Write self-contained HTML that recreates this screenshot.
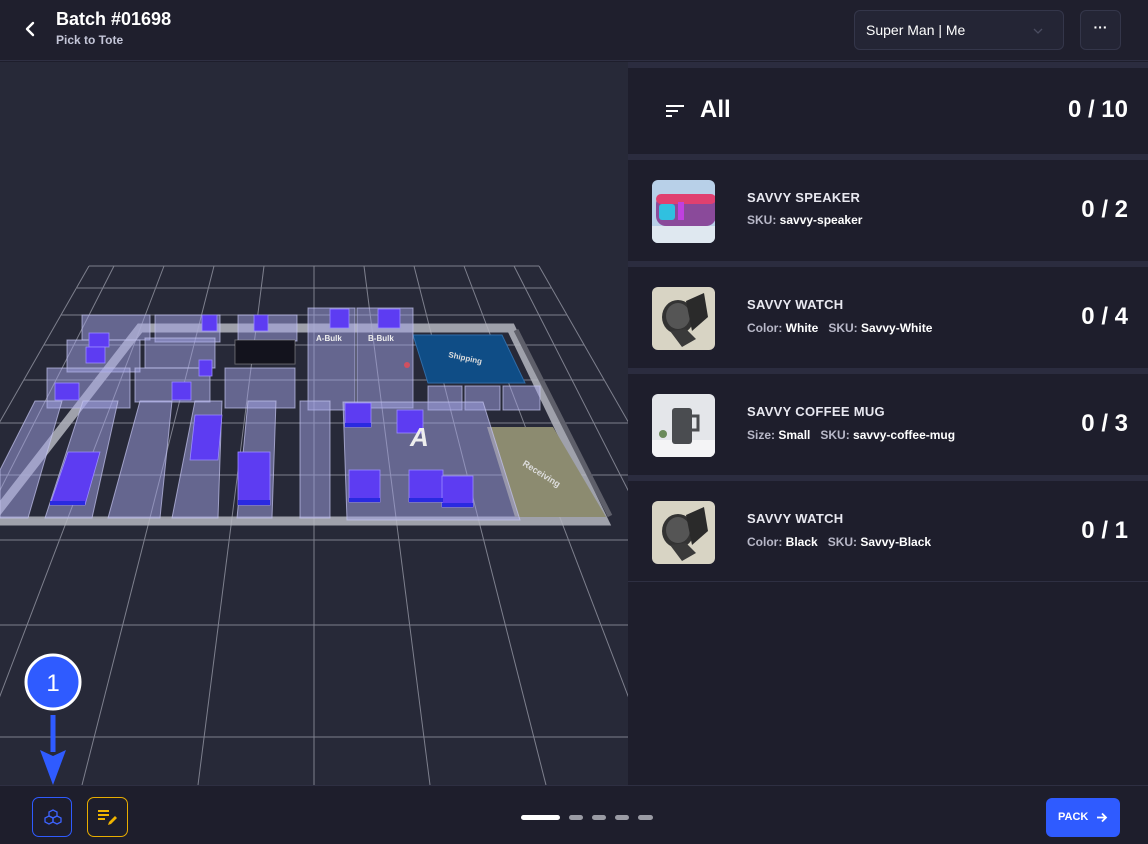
<!DOCTYPE html>
<html><head><meta charset="utf-8">
<style>
*{margin:0;padding:0;box-sizing:border-box}
body{width:1148px;height:844px;overflow:hidden;background:#1e1e2c;font-family:"Liberation Sans",sans-serif;color:#fff;position:relative}
.abs{position:absolute}
.hdr{left:0;top:0;width:1148px;height:61px;background:#1f1f2d;border-bottom:1px solid #2e2f42}
.canvas{left:0;top:62px;width:628px;height:723px;background:#272938;overflow:hidden}
.panel{left:628px;top:62px;width:520px;height:723px;background:#1e1e2c}
.sep{position:absolute;left:0;width:520px;height:6px;background:#2b2c3f}
.row{position:absolute;left:0;width:520px}
.thumb{position:absolute;left:24px;width:63px;height:63px;border-radius:6px;overflow:hidden}
.name{position:absolute;left:119px;font-size:13px;font-weight:bold;letter-spacing:.3px;color:#e8e8f0}
.det{position:absolute;left:119px;font-size:12px;font-weight:bold;color:#fff;white-space:nowrap}
.det span{color:#b8b8c8}
.cnt{position:absolute;right:20px;font-size:24px;font-weight:bold}
.foot{left:0;top:785px;width:1148px;height:59px;background:#1e1e2c;border-top:1px solid #2e2f42}
</style></head><body>
<div class="abs hdr">
  <svg class="abs" style="left:24px;top:21px" width="14" height="16" viewBox="0 0 14 16"><path d="M9 2 L3 8 L9 14" fill="none" stroke="#fff" stroke-width="2.4" stroke-linecap="round" stroke-linejoin="round"/></svg>
  <div class="abs" style="left:56px;top:9px;font-size:18px;font-weight:bold">Batch #01698</div>
  <div class="abs" style="left:56px;top:33px;font-size:12px;font-weight:bold;color:#c4c6d8">Pick to Tote</div>
  <div class="abs" style="left:854px;top:10px;width:210px;height:40px;background:#242535;border:1px solid #34364a;border-radius:6px">
    <div class="abs" style="left:11px;top:11px;font-size:14px;color:#fff">Super Man | Me</div>
    <svg class="abs" style="left:178px;top:16px" width="10" height="8" viewBox="0 0 10 8"><path d="M1 2 L5 6 L9 2" fill="none" stroke="#4a4c60" stroke-width="1.3"/></svg>
  </div>
  <div class="abs" style="left:1080px;top:10px;width:41px;height:40px;background:#242535;border:1px solid #34364a;border-radius:6px;text-align:center;font-size:14px;line-height:32px;font-weight:bold">···</div>
</div>

<div class="abs canvas">
<svg width="628" height="723" viewBox="0 62 628 723" style="position:absolute;left:0;top:0">
 <g stroke="#8d8f9c" stroke-width="1" fill="none" opacity="0.85">
  <line x1="89" y1="266" x2="-208" y2="785"/>
  <line x1="114" y1="266" x2="-150" y2="785"/>
  <line x1="164" y1="266" x2="-34" y2="785"/>
  <line x1="214" y1="266" x2="82" y2="785"/>
  <line x1="264" y1="266" x2="198" y2="785"/>
  <line x1="314" y1="266" x2="314" y2="785"/>
  <line x1="364" y1="266" x2="430" y2="785"/>
  <line x1="414" y1="266" x2="546" y2="785"/>
  <line x1="464" y1="266" x2="662" y2="785"/>
  <line x1="514" y1="266" x2="778" y2="785"/>
  <line x1="539" y1="266" x2="836" y2="785"/>
  <line x1="89" y1="266" x2="539" y2="266"/>
  <line x1="77" y1="288" x2="551" y2="288"/>
  <line x1="61" y1="315" x2="567" y2="315"/>
  <line x1="44" y1="345" x2="584" y2="345"/>
  <line x1="24" y1="380" x2="604" y2="380"/>
  <line x1="0" y1="423" x2="628" y2="423"/>
  <line x1="0" y1="475" x2="628" y2="475"/>
  <line x1="0" y1="540" x2="628" y2="540"/>
  <line x1="0" y1="625" x2="628" y2="625"/>
  <line x1="0" y1="737" x2="628" y2="737"/>
 </g>
 <!-- floor border frame -->
 <polygon points="140,328 511,328 604,521 -10,521" fill="none" stroke="#b5b6bf" stroke-width="9" stroke-opacity="0.85" stroke-linejoin="miter"/>
 <polyline points="516,330 610,516" fill="none" stroke="#5e5f6a" stroke-width="5"/>
 <!-- Receiving -->
 <polygon points="487,427 553,427 606,517 515,517" fill="#8c8b70"/>
 <text x="522" y="465" font-size="9" fill="#ddd" transform="rotate(32 522 465)" font-weight="bold">Receiving</text>
 <!-- Shipping -->
 <polygon points="413,335 502,335 525,383 428,383" fill="#0f4d86" stroke="#2f6ca8"/>
 <text x="448" y="357" font-size="8" fill="#ddd" font-weight="bold" transform="rotate(12 448 357)">Shipping</text>
 <g fill="#a4a4e6" fill-opacity="0.5" stroke="#c4c4f0" stroke-opacity="0.7" stroke-width="1">
  <rect x="82" y="315" width="68" height="25"/><rect x="155" y="315" width="65" height="27"/><rect x="238" y="315" width="59" height="26"/>
  <rect x="67" y="340" width="73" height="32"/><rect x="145" y="338" width="70" height="30"/>
  <rect x="47" y="368" width="83" height="40"/><rect x="135" y="368" width="75" height="34"/><rect x="225" y="368" width="70" height="40"/>
  <rect x="308" y="308" width="47" height="102"/><rect x="357" y="308" width="56" height="100"/>
  <rect x="428" y="386" width="34" height="24"/><rect x="465" y="386" width="35" height="24"/><rect x="503" y="386" width="37" height="24"/>
  <polygon points="35,401 62,401 28,518 0,518 0,470"/>
  <polygon points="83,401 118,401 92,518 45,518"/>
  <polygon points="140,401 172,401 160,518 108,518"/>
  <polygon points="195,401 222,401 218,518 172,518"/>
  <polygon points="248,401 276,401 272,518 237,518"/>
  <rect x="300" y="401" width="30" height="117"/>
  <polygon points="343,402 483,402 520,520 347,520"/>
 </g>
 <rect x="235" y="340" width="60" height="24" fill="#13131d" stroke="#aaa" stroke-opacity=".5"/>
 <g fill="#5d3cf2" stroke="#9a8cff" stroke-width="0.8">
  <rect x="330" y="309" width="19" height="19"/><rect x="378" y="309" width="22" height="19"/>
  <rect x="202" y="315" width="15" height="16"/><rect x="254" y="315" width="14" height="16"/>
  <rect x="89" y="333" width="20" height="14"/><rect x="86" y="347" width="19" height="16"/>
  <rect x="199" y="360" width="13" height="16"/>
  <rect x="55" y="383" width="24" height="17"/><rect x="172" y="382" width="19" height="18"/>
  <rect x="345" y="403" width="26" height="24"/><rect x="397" y="410" width="26" height="23"/>
  <polygon points="195,415 222,415 218,460 190,460"/>
  <polygon points="68,452 100,452 85,505 50,505"/>
  <rect x="238" y="452" width="32" height="53"/>
  <rect x="349" y="470" width="31" height="32"/><rect x="409" y="470" width="34" height="32"/><rect x="442" y="476" width="31" height="31"/>
 </g>
 <g fill="#2a2ae0">
  <rect x="345" y="423" width="26" height="4"/><rect x="238" y="500" width="32" height="5"/><rect x="349" y="498" width="31" height="4"/><rect x="409" y="498" width="34" height="4"/><rect x="442" y="503" width="31" height="4"/><rect x="50" y="501" width="35" height="4"/>
 </g>
 <g fill="#eee" font-size="8" font-weight="bold">
  <text x="316" y="341">A-Bulk</text><text x="368" y="341">B-Bulk</text>
 </g>
 <circle cx="407" cy="365" r="3" fill="#d05060"/>
 <text x="410" y="446" font-size="26" font-weight="bold" fill="#eee" font-style="italic">A</text>
</svg>
<svg class="abs" style="left:0;top:0" width="628" height="723">
 <path d="M53 653 L53 690" stroke="#2f5bff" stroke-width="5"/>
 <path d="M40 688 L53 723 L66 688 L53 694 Z" fill="#2f5bff"/>
 <circle cx="53" cy="620" r="27" fill="#2f5bff" stroke="#fff" stroke-width="3"/>
 <text x="53" y="629" font-size="24" text-anchor="middle" fill="#fff">1</text>
</svg>
</div>

<div class="abs panel">
  <div class="sep" style="top:0"></div>
  <div class="row" style="top:6px;height:86px">
    <svg class="abs" style="left:38px;top:37px" width="20" height="14"><rect x="0" y="0" width="18" height="2" fill="#fff"/><rect x="0" y="5" width="12" height="2" fill="#fff"/><rect x="0" y="10" width="6" height="2" fill="#fff"/></svg>
    <div class="abs" style="left:72px;top:28px;font-size:24px;font-weight:bold">All</div>
    <div class="cnt" style="top:28px">0 / 10</div>
  </div>
  <div class="sep" style="top:92px"></div>
  <div class="row" style="top:98px;height:101px">
    <div class="thumb" style="top:20px"><svg width="63" height="63"><rect width="63" height="63" fill="#b8d0e8"/><rect x="0" y="46" width="63" height="17" fill="#dfe8f0"/><rect x="4" y="14" width="60" height="32" rx="10" fill="#8a4a9a"/><rect x="4" y="14" width="60" height="10" rx="5" fill="#e04070"/><rect x="7" y="24" width="16" height="16" rx="3" fill="#30c0e0"/><rect x="26" y="22" width="6" height="18" fill="#c040e0"/></svg></div>
    <div class="name" style="top:30px">SAVVY SPEAKER</div>
    <div class="det" style="top:53px"><span>SKU:</span> savvy-speaker</div>
    <div class="cnt" style="top:36px">0 / 2</div>
  </div>
  <div class="sep" style="top:199px"></div>
  <div class="row" style="top:205px;height:101px">
    <div class="thumb" style="top:20px"><svg width="63" height="63"><rect width="63" height="63" fill="#d8d4c4"/><ellipse cx="26" cy="30" rx="16" ry="17" fill="#333"/><ellipse cx="26" cy="29" rx="12" ry="13" fill="#555"/><path d="M34 14 L52 6 L56 30 L40 44 Z" fill="#2a2a2a"/><path d="M18 44 L30 60 L44 52 L34 42 Z" fill="#3a3a3a"/></svg></div>
    <div class="name" style="top:30px">SAVVY WATCH</div>
    <div class="det" style="top:54px"><span>Color:</span> White &nbsp;&nbsp;<span>SKU:</span> Savvy-White</div>
    <div class="cnt" style="top:36px">0 / 4</div>
  </div>
  <div class="sep" style="top:306px"></div>
  <div class="row" style="top:312px;height:101px">
    <div class="thumb" style="top:20px"><svg width="63" height="63"><rect width="63" height="63" fill="#e4e6ea"/><rect x="0" y="46" width="63" height="17" fill="#f4f4f6"/><rect x="20" y="14" width="20" height="36" rx="3" fill="#4a4c50"/><path d="M40 22 h6 v14 h-6" fill="none" stroke="#4a4c50" stroke-width="3"/><circle cx="11" cy="40" r="4" fill="#6a8a5a"/></svg></div>
    <div class="name" style="top:30px">SAVVY COFFEE MUG</div>
    <div class="det" style="top:54px"><span>Size:</span> Small &nbsp;&nbsp;<span>SKU:</span> savvy-coffee-mug</div>
    <div class="cnt" style="top:36px">0 / 3</div>
  </div>
  <div class="sep" style="top:413px"></div>
  <div class="row" style="top:419px;height:101px;border-bottom:1px solid #2e2f42">
    <div class="thumb" style="top:20px"><svg width="63" height="63"><rect width="63" height="63" fill="#d8d4c4"/><ellipse cx="26" cy="30" rx="16" ry="17" fill="#333"/><ellipse cx="26" cy="29" rx="12" ry="13" fill="#555"/><path d="M34 14 L52 6 L56 30 L40 44 Z" fill="#2a2a2a"/><path d="M18 44 L30 60 L44 52 L34 42 Z" fill="#3a3a3a"/></svg></div>
    <div class="name" style="top:30px">SAVVY WATCH</div>
    <div class="det" style="top:54px"><span>Color:</span> Black &nbsp;&nbsp;<span>SKU:</span> Savvy-Black</div>
    <div class="cnt" style="top:36px">0 / 1</div>
  </div>
</div>

<div class="abs foot">
  <div class="abs" style="left:32px;top:11px;width:40px;height:40px;border:1px solid #2f5bff;border-radius:7px">
    <svg class="abs" style="left:10px;top:10px" width="20" height="20" viewBox="0 0 20 20" fill="none" stroke="#3d63ff" stroke-width="1.3"><path d="M10 2 L14 4 L14 8 L10 10 L6 8 L6 4 Z"/><path d="M6 8 L10 10 L10 14 L6 16 L2 14 L2 10 Z"/><path d="M14 8 L18 10 L18 14 L14 16 L10 14 L10 10 Z"/></svg>
  </div>
  <div class="abs" style="left:87px;top:11px;width:41px;height:40px;border:1px solid #e8ad00;border-radius:7px">
    <svg class="abs" style="left:10px;top:11px" width="20" height="18" viewBox="0 0 20 18"><rect x="0" y="1" width="11" height="2" fill="#f0b400"/><rect x="0" y="5" width="11" height="2" fill="#f0b400"/><rect x="0" y="9" width="7" height="2" fill="#f0b400"/><path d="M10 16 L11 13 L17 7 L19 9 L13 15 Z" fill="#f0b400"/></svg>
  </div>
  <div class="abs" style="left:521px;top:29px;width:39px;height:5px;border-radius:3px;background:#fff"></div>
  <div class="abs" style="left:569px;top:29px;width:14px;height:5px;border-radius:3px;background:#9a9ba4"></div>
  <div class="abs" style="left:592px;top:29px;width:14px;height:5px;border-radius:3px;background:#9a9ba4"></div>
  <div class="abs" style="left:615px;top:29px;width:14px;height:5px;border-radius:3px;background:#9a9ba4"></div>
  <div class="abs" style="left:638px;top:29px;width:15px;height:5px;border-radius:3px;background:#9a9ba4"></div>
  <div class="abs" style="left:1046px;top:12px;width:74px;height:39px;background:#2f5bff;border-radius:6px;font-size:11px;font-weight:bold;line-height:39px;padding-left:12px">PACK
    <svg class="abs" style="left:50px;top:14px" width="12" height="11" viewBox="0 0 12 11"><path d="M1 5.5 H10 M6 1.5 L10 5.5 L6 9.5" fill="none" stroke="#fff" stroke-width="1.8"/></svg>
  </div>
</div>
</body></html>
